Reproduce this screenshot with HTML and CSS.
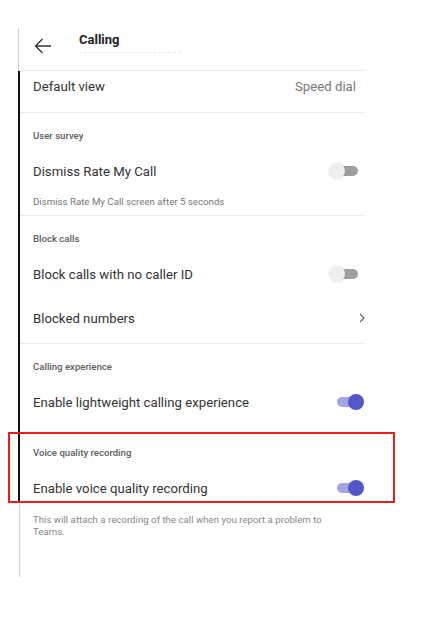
FILE: index.html
```html
<!DOCTYPE html>
<html>
	<head>
		<link rel="stylesheet" href="styles.css">
	</head>
	<body>
		<div class="screen">
			<div class="topbar">
				<svg class="back" width="18" height="16" viewBox="0 0 18 16">
					<path d="M17 8H1.5M8.5 1L1.5 8l7 7" fill="none" stroke="#333" stroke-width="1.3"/>
				</svg>
				<div class="title">
					<div class="title-text">Calling</div>
					<div class="subtitle"></div>
				</div>
			</div>
			<div class="list">
				<div class="row-value">
					<span class="item">Default view</span>
					<span class="value">Speed dial</span>
				</div>
				<div class="section">
					<div class="label">User survey</div>
					<div class="row first">
						<span class="item">Dismiss Rate My Call</span>
						<span class="toggle"><span class="track"></span><span class="knob"></span></span>
					</div>
					<div class="desc">Dismiss Rate My Call screen after 5 seconds</div>
				</div>
				<div class="section blocks">
					<div class="label">Block calls</div>
					<div class="row first">
						<span class="item">Block calls with no caller ID</span>
						<span class="toggle"><span class="track"></span><span class="knob"></span></span>
					</div>
					<div class="row second">
						<span class="item">Blocked numbers</span>
						<svg class="chevron" width="6" height="10" viewBox="0 0 6 10">
							<path d="M1 1l4 4-4 4" fill="none" stroke="#666" stroke-width="1.2"/>
						</svg>
					</div>
				</div>
				<div class="section plain">
					<div class="label">Calling experience</div>
					<div class="row first">
						<span class="item">Enable lightweight calling experience</span>
						<span class="toggle on"><span class="track"></span><span class="knob"></span></span>
					</div>
				</div>
				<div class="highlight">
					<div class="label">Voice quality recording</div>
					<div class="row first">
						<span class="item">Enable voice quality recording</span>
						<span class="toggle on"><span class="track"></span><span class="knob"></span></span>
					</div>
				</div>
			</div>
			<div class="footer">
				<div class="note">This will attach a recording of the call when you report a problem to Teams.</div>
			</div>
		</div>
	</body>
</html>
```

FILE: styles.css
```css
body {
	margin: 0;
	background-color: white;
	font-family: Roboto, "Noto Sans", sans-serif;
	color: #333;
}
.screen {
	margin-left: 18px;
	width: 348px;
	padding-top: 28px;
}
.topbar {
	height: 43px;
	box-sizing: border-box;
	border-left: 1px solid #cfcfcf;
	border-bottom: 1px solid #ececec;
	display: flex;
	align-items: flex-start;
	padding-left: 15px;
}
.back {
	margin-top: 10px;
}
.title {
	margin-left: 27px;
	margin-top: 4px;
}
.title-text {
	font-size: 13px;
	font-weight: bold;
	line-height: 16px;
	color: #222;
}
.subtitle {
	width: 102px;
	margin-top: 4px;
	border-top: 1px dashed #ebebeb;
}
.list {
	border-left: 2px solid #111;
}
.row-value {
	height: 42px;
	box-sizing: border-box;
	padding: 6px 10px 0 13px;
	border-bottom: 1px solid #ececec;
	display: flex;
	justify-content: space-between;
	line-height: 20px;
}
.item {
	font-size: 13.2px;
}
.value {
	font-size: 13.2px;
	color: #777;
}
.section {
	padding: 16px 1px 6px 13px;
	border-bottom: 1px solid #ececec;
}
.blocks {
	padding-bottom: 15px;
}
.plain {
	border-bottom: none;
	padding-bottom: 0;
}
.label {
	font-size: 9.6px;
	font-weight: 500;
	line-height: 14px;
	color: #5c5c5c;
}
.row {
	display: flex;
	justify-content: space-between;
	align-items: center;
	height: 20px;
}
.first {
	margin-top: 18px;
}
.second {
	margin-top: 24px;
}
.desc {
	margin-top: 14px;
	font-size: 9.7px;
	line-height: 14px;
	color: #777;
}
.toggle {
	position: relative;
	width: 35px;
	height: 16px;
	margin-right: 1px;
}
.track {
	position: absolute;
	left: 8px;
	top: 3px;
	width: 21px;
	height: 10px;
	border-radius: 5px;
	background-color: #9e9e9e;
}
.knob {
	position: absolute;
	left: 0;
	top: 0;
	width: 16px;
	height: 16px;
	border-radius: 50%;
	background-color: #efefef;
	box-shadow: 0 0 2px rgba(0, 0, 0, 0.15);
}
.on .track {
	background-color: #a3a5e3;
}
.on .knob {
	left: 19px;
	background-color: #5457c7;
	box-shadow: none;
}
.highlight {
	position: relative;
	padding: 14px 1px 5px 13px;
	margin-top: 20px;
}
.highlight::after {
	content: "";
	position: absolute;
	top: 0;
	bottom: 0;
	left: -12px;
	right: -29px;
	border: 2px solid #e61e1e;
}
.footer {
	margin-left: 1px;
	border-left: 1px solid #cfcfcf;
	height: 74px;
	box-sizing: border-box;
	padding: 11px 20px 0 13px;
}
.note {
	font-size: 9.7px;
	line-height: 12px;
	color: #888;
}
```
